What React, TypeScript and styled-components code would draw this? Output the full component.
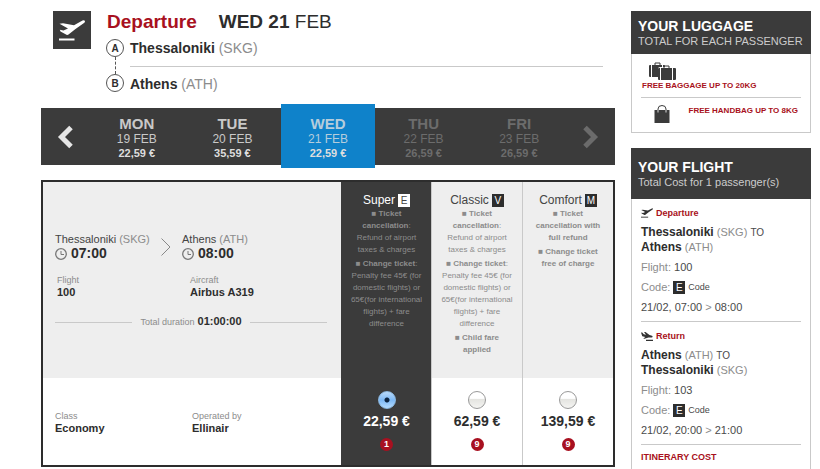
import React, { useState } from 'react';
import styled, { createGlobalStyle, css } from 'styled-components';

const ink = '#2d2d2d';
const dark = '#3b3b3b';
const red = '#a81020';
const muted = '#8c8c8c';
const rule = '#c9c9c9';

const Global = createGlobalStyle`
  * { box-sizing: border-box; }
  body {
    margin: 0;
    background: #fff;
    color: ${ink};
    font-family: "Liberation Sans", Arial, sans-serif;
  }
  h1, h2, h3, p, ul, dl, dd { margin: 0; padding: 0; }
  button { font: inherit; border: 0; padding: 0; background: none; cursor: pointer; }
`;

const Page = styled.div`
  display: grid;
  grid-template-columns: minmax(0, 1fr) 180px;
  gap: 16px;
  min-height: 100vh;
  padding: 11px 9px 0 41px;
`;

const Header = styled.header`
  display: flex;
  gap: 15px;
  padding: 0 12px;
`;

const IconTile = styled.div`
  display: grid;
  place-items: center;
  flex: none;
  width: 38px;
  height: 38px;
  background: ${dark};
  color: #fff;
`;

const Trip = styled.div`
  flex: 1;
`;

const Heading = styled.div`
  display: flex;
  gap: 22px;
  padding-left: 1px;
  font-size: 19px;
  line-height: 22px;
  margin-bottom: 6px;
`;

const Direction = styled.h1`
  font-size: inherit;
  color: ${red};
`;

const Route = styled.div`
  display: grid;
  grid-template-columns: 18px 1fr;
  column-gap: 6px;
`;

const Markers = styled.div`
  display: flex;
  flex-direction: column;
  align-items: center;
`;

const Marker = styled.span`
  display: grid;
  place-items: center;
  width: 18px;
  height: 18px;
  border: 1px solid #555;
  border-radius: 50%;
  font-size: 10px;
  font-weight: bold;
`;

const Dashes = styled.span`
  height: 17px;
  border-left: 1px dashed #555;
`;

const Stop = styled.div<{ $last?: boolean }>`
  font-size: 14px;
  line-height: 18px;
  padding-bottom: ${p => (p.$last ? 0 : 9)}px;
  border-bottom: ${p => (p.$last ? 'none' : `1px solid ${rule}`)};
  margin-bottom: ${p => (p.$last ? 0 : 8)}px;
`;

const Muted = styled.span<{ $size?: number }>`
  color: ${muted};
  font-weight: normal;
  ${p => p.$size && css`font-size: ${p.$size}px;`}
`;

const DayBar = styled.nav`
  display: grid;
  grid-template-columns: 48px repeat(5, 1fr) 48px;
  margin: 15px 0;
  background: ${dark};
  height: 57px;
`;

const Arrow = styled.button<{ $dim?: boolean }>`
  display: grid;
  place-items: center;
  color: ${p => (p.$dim ? '#6b6b6b' : '#e6e6e6')};
`;

const Day = styled.button<{ $state: 'open' | 'active' | 'dim' }>`
  display: flex;
  flex-direction: column;
  align-items: center;
  padding-top: 7px;
  font-size: 12px;
  line-height: 15px;
  color: ${p => (p.$state === 'dim' ? '#6c6c6c' : '#c9c9c9')};
  ${p => p.$state === 'active' && css`
    background: #0f82ca;
    color: #b5cddc;
    margin: -4px 1px -3px;
    padding-top: 11px;
  `}
`;

const DayName = styled.strong`
  font-size: 15px;
  line-height: 17px;
`;

const DayPrice = styled.strong<{ $bright?: boolean }>`
  font-size: 11px;
  line-height: 13px;
  ${p => p.$bright && css`color: #dedede;`}
`;

const Fares = styled.section`
  display: grid;
  grid-template-columns: minmax(0, 1fr) 90px 91px 91px;
  border: 2px solid ${ink};
`;

const Details = styled.div`
  background: #eee;
  padding: 50px 14px 0 12px;
`;

const Legs = styled.div`
  display: grid;
  grid-template-columns: 106px 21px 1fr;
  align-items: center;
`;

const Place = styled.div`
  font-size: 11px;
  line-height: 14px;
  color: #444;
  white-space: nowrap;
`;

const Time = styled.div`
  display: flex;
  align-items: center;
  gap: 4px;
  font-size: 14px;
  line-height: 15px;
  font-weight: bold;
  color: ${ink};
`;

const Facts = styled.dl<{ $inset?: number; $split?: number }>`
  display: grid;
  grid-template-columns: ${p => p.$split}px 1fr;
  padding-left: ${p => p.$inset || 0}px;
  line-height: 12px;
`;

const FactsBlock = styled.div`
  margin-top: 13px;
`;

const FactName = styled.dt`
  font-size: 9px;
  color: ${muted};
`;

const FactValue = styled.dd`
  font-size: 11px;
  font-weight: bold;
`;

const Duration = styled.div`
  display: flex;
  align-items: center;
  gap: 8px;
  margin-top: 17px;
  font-size: 11px;
  line-height: 13px;
  font-weight: bold;
  &::before, &::after {
    content: '';
    flex: 1;
    border-top: 1px solid ${rule};
  }
`;

const Operation = styled.div`
  padding: 32px 12px 0;
`;

const FareInfo = styled.div<{ $active: boolean }>`
  padding: 11px 6px 22px;
  border-left: 1px solid ${p => (p.$active ? dark : rule)};
  background: ${p => (p.$active ? dark : '#eee')};
  color: ${p => (p.$active ? '#fff' : '#444')};
  text-align: center;
`;

const FareTitle = styled.h3`
  display: flex;
  justify-content: center;
  align-items: center;
  gap: 3px;
  font-size: 12px;
  line-height: 15px;
  font-weight: normal;
`;

const CodeBadge = styled.span<{ $light?: boolean }>`
  display: inline-grid;
  place-items: center;
  width: 12px;
  height: 13px;
  font-size: 10px;
  line-height: 13px;
  background: ${p => (p.$light ? '#fff' : ink)};
  color: ${p => (p.$light ? '#444' : '#fff')};
`;

const Terms = styled.ul`
  display: grid;
  gap: 2px;
  list-style: none;
  font-size: 8px;
  line-height: 12px;
  color: ${muted};
`;

const Line = styled.span`
  display: block;
  white-space: nowrap;
`;

const FarePick = styled.label<{ $active: boolean }>`
  display: flex;
  flex-direction: column;
  align-items: center;
  padding: 13px 0 14px;
  border-left: 1px solid ${p => (p.$active ? dark : rule)};
  background: ${p => (p.$active ? dark : '#fff')};
  color: ${p => (p.$active ? '#fff' : ink)};
  font-size: 14px;
  line-height: 16px;
  font-weight: bold;
  cursor: pointer;
`;

const Radio = styled.input`
  appearance: none;
  width: 18px;
  height: 18px;
  margin: 0 0 4px;
  border: 1px solid #999;
  border-radius: 50%;
  background: linear-gradient(#fff 40%, #e4e4e0 45%, #f4f4f2);
  &:checked {
    border-color: #8cb8e0;
    background:
      radial-gradient(circle, #0b2340 2px, transparent 3px),
      linear-gradient(#b9dafa, #7db8f4 50%, #b5dcff);
  }
`;

const Seats = styled.span`
  display: grid;
  place-items: center;
  width: 13px;
  height: 13px;
  margin-top: 9px;
  border-radius: 50%;
  background: ${red};
  color: #fff;
  font-size: 9px;
  line-height: 13px;
`;

const Side = styled.aside`
  display: flex;
  flex-direction: column;
  gap: 15px;
`;

const Panel = styled.section<{ $grow?: boolean }>`
  border: 1px solid ${rule};
  border-top: 0;
  ${p => p.$grow && css`flex: 1; border-bottom: 0;`}
`;

const PanelHead = styled.header<{ $tall?: boolean }>`
  margin: 0 -1px;
  padding: ${p => (p.$tall ? '11px 7px 9px' : '7px 7px 5px')};
  background: ${dark};
  color: #ccc;
  font-size: 11px;
  line-height: 15px;
  white-space: nowrap;
`;

const PanelTitle = styled.h2`
  font-size: 14px;
  line-height: 16px;
  color: #fff;
`;

const PanelBody = styled.div`
  padding: 0 9px;
`;

const Allowance = styled.p<{ $row?: boolean }>`
  display: flex;
  flex-direction: ${p => (p.$row ? 'row' : 'column')};
  justify-content: ${p => (p.$row ? 'space-between' : 'flex-start')};
  padding: ${p => (p.$row ? '7px 3px 8px 13px' : '8px 1px 5px')};
  font-size: 8px;
  line-height: 12px;
  font-weight: bold;
  color: ${red};
  white-space: nowrap;
`;

const Divider = styled.hr`
  margin: 0;
  border: 0;
  border-top: 1px solid ${rule};
`;

const BagIcon = styled.svg`
  display: block;
  margin-left: 7px;
`;

const Leg = styled.div`
  padding: 8px 0 4px;
  font-size: 11px;
  line-height: 20px;
  color: #4a4a4a;
`;

const LegKind = styled.h3`
  display: flex;
  align-items: center;
  gap: 3px;
  font-size: 9px;
  line-height: 12px;
  color: ${red};
`;

const LegRoute = styled.p`
  margin: 6px 0 2px;
  line-height: 15px;
  strong, span { line-height: 1; }
  strong { font-size: 12px; color: ${ink}; }
`;

const ToWord = styled.span`
  font-size: 10px;
`;

const CodeRow = styled.p`
  display: flex;
  align-items: center;
  gap: 3px;
`;

const Small = styled.span`
  font-size: 9px;
`;

const CostTitle = styled.h3`
  padding: 6px 0 5px;
  font-size: 9px;
  line-height: 13px;
  color: ${red};
`;

const Takeoff = ({ width, height, color = 'currentColor' }: { width: number; height: number; color?: string }) => (
  <svg width={width} height={height} viewBox="0 0 26 21" fill={color} aria-hidden="true">
    <path d="M.5 3.800L4 3.200 15 5.300 23.500.5q2-.8 2.500.8 0 1-1 1.700L16.500 9 9.500 14.500q-1 .7-2 .2L1.500 11.500.8 9.800 4.500 10.500 9 8.600z" />
    <path d="M0 18.500h15.500V20.500H0z" />
  </svg>
);

const Landing = () => (
  <svg width="12" height="10" viewBox="0 0 24 20" fill="#333" aria-hidden="true">
    <path d="M0 3h2.500l3 3.500 4.500.8L6 2h3l8 6 5 1.500c2 .8 1.500 3.500-.5 3.500H15l-8 2.500H4.500l4-3.500-6-1.500z" />
    <path d="M10 17.500h14V20H10z" />
  </svg>
);

const Clock = () => (
  <svg width="12" height="12" viewBox="0 0 12 12" fill="none" stroke="#777" aria-hidden="true">
    <circle cx="6" cy="6" r="5.300" strokeWidth="1.300" />
    <path d="M6 3V6.500H9" />
  </svg>
);

const Caret = ({ flip }: { flip?: boolean }) => (
  <svg width="16" height="24" viewBox="0 0 16 24" fill="none" stroke="currentColor" strokeWidth="5" aria-hidden="true">
    <path d={flip ? 'M2 2.500L11.500 12 2 21.500' : 'M14 2.500L4.500 12 14 21.500'} />
  </svg>
);

const days = [
  { name: 'MON', date: '19 FEB', price: '22,59 €', state: 'open' },
  { name: 'TUE', date: '20 FEB', price: '35,59 €', state: 'open' },
  { name: 'WED', date: '21 FEB', price: '22,59 €', state: 'active' },
  { name: 'THU', date: '22 FEB', price: '26,59 €', state: 'dim' },
  { name: 'FRI', date: '23 FEB', price: '26,59 €', state: 'dim' },
] as const;

type Term = { bold: string[]; colon?: boolean; text?: string[] };

const paid: Term[] = [
  { bold: ['■ Ticket', 'cancellation'], colon: true, text: ['Refund of airport', 'taxes & charges'] },
  {
    bold: ['■ Change ticket'],
    colon: true,
    text: ['Penalty fee 45€ (for', 'domestic flights) or', '65€(for international', 'flights) + fare', 'difference'],
  },
];

const fares: { name: string; code: string; price: string; seats: number; terms: Term[] }[] = [
  { name: 'Super', code: 'E', price: '22,59 €', seats: 1, terms: paid },
  { name: 'Classic', code: 'V', price: '62,59 €', seats: 9, terms: [...paid, { bold: ['■ Child fare', 'applied'] }] },
  {
    name: 'Comfort',
    code: 'M',
    price: '139,59 €',
    seats: 9,
    terms: [{ bold: ['■ Ticket', 'cancellation with', 'full refund'] }, { bold: ['■ Change ticket', 'free of charge'] }],
  },
];

const legs = [
  { kind: 'Departure', from: 'Thessaloniki', fromCode: 'SKG', to: 'Athens', toCode: 'ATH', flight: '100', start: '21/02, 07:00', end: '08:00' },
  { kind: 'Return', from: 'Athens', fromCode: 'ATH', to: 'Thessaloniki', toCode: 'SKG', flight: '103', start: '21/02, 20:00', end: '21:00' },
];

export default function App() {
  const [picked, setPicked] = useState('Super');
  return (
    <>
      <Global />
      <Page>
        <main>
          <Header>
            <IconTile><Takeoff width={26} height={21} /></IconTile>
            <Trip>
              <Heading>
                <Direction>Departure</Direction>
                <span><strong>WED 21</strong> FEB</span>
              </Heading>
              <Route>
                <Markers>
                  <Marker>A</Marker>
                  <Dashes />
                  <Marker>B</Marker>
                </Markers>
                <div>
                  <Stop><strong>Thessaloniki</strong> <Muted>(SKG)</Muted></Stop>
                  <Stop $last><strong>Athens</strong> <Muted>(ATH)</Muted></Stop>
                </div>
              </Route>
            </Trip>
          </Header>

          <DayBar aria-label="Travel day">
            <Arrow aria-label="Previous days"><Caret /></Arrow>
            {days.map(d => (
              <Day key={d.name} $state={d.state}>
                <DayName>{d.name}</DayName>
                <span>{d.date}</span>
                <DayPrice $bright={d.state !== 'dim'}>{d.price}</DayPrice>
              </Day>
            ))}
            <Arrow $dim aria-label="Next days"><Caret flip /></Arrow>
          </DayBar>

          <Fares>
            <Details>
              <Legs>
                <div>
                  <Place>Thessaloniki <Muted>(SKG)</Muted></Place>
                  <Time><Clock />07:00</Time>
                </div>
                <svg width="10" height="18" viewBox="0 0 10 18" fill="none" stroke="#888" aria-hidden="true">
                  <path d="M.5 .5L9 9 .5 17.500" />
                </svg>
                <div>
                  <Place>Athens <Muted>(ATH)</Muted></Place>
                  <Time><Clock />08:00</Time>
                </div>
              </Legs>
              <FactsBlock>
                <Facts $inset={2} $split={133}>
                  <div><FactName>Flight</FactName><FactValue>100</FactValue></div>
                  <div><FactName>Aircraft</FactName><FactValue>Airbus A319</FactValue></div>
                </Facts>
              </FactsBlock>
              <Duration><span><Muted $size={9}>Total duration</Muted> 01:00:00</span></Duration>
            </Details>
            {fares.map(f => (
              <FareInfo key={f.name} $active={picked === f.name}>
                <FareTitle>{f.name} <CodeBadge $light={picked === f.name}>{f.code}</CodeBadge></FareTitle>
                <Terms>
                  {f.terms.map(t => (
                    <li key={t.bold[0]}>
                      {t.bold.map((b, i) => (
                        <Line key={b}><strong>{b}</strong>{t.colon && i === t.bold.length - 1 ? ':' : ''}</Line>
                      ))}
                      {t.text?.map(x => <Line key={x}>{x}</Line>)}
                    </li>
                  ))}
                </Terms>
              </FareInfo>
            ))}
            <Operation>
              <Facts $split={137}>
                <div><FactName>Class</FactName><FactValue>Economy</FactValue></div>
                <div><FactName>Operated by</FactName><FactValue>Ellinair</FactValue></div>
              </Facts>
            </Operation>
            {fares.map(f => (
              <FarePick key={f.name} $active={picked === f.name}>
                <Radio
                  type="radio"
                  name="fare"
                  aria-label={f.name}
                  checked={picked === f.name}
                  onChange={() => setPicked(f.name)}
                />
                <span>{f.price}</span>
                <Seats>{f.seats}</Seats>
              </FarePick>
            ))}
          </Fares>
        </main>

        <Side>
          <Panel>
            <PanelHead>
              <PanelTitle>YOUR LUGGAGE</PanelTitle>
              TOTAL FOR EACH PASSENGER
            </PanelHead>
            <PanelBody>
              <Allowance>
                <BagIcon width="28" height="18" viewBox="0 0 28 18" fill={dark} aria-hidden="true">
                  <path d="M0 4q0-1 1-1h1v12H1q-1 0-1-1zM3 3h10v2h-2q-2 0-2 2v8H3zM14 3h1q1 0 1 1v1h-2z" />
                  <path d="M6 3V1h5v2" fill="none" stroke={dark} />
                  <path d="M9 7q0-1 1-1h1v12h-1q-1 0-1-1zM12 6h11v12H12zM24 6h2q1 0 1 1v10q0 1-1 1h-2z" />
                  <path d="M15 6V4h5v2" fill="none" stroke={dark} />
                </BagIcon>
                FREE BAGGAGE UP TO 20KG
              </Allowance>
              <Divider />
              <Allowance $row>
                <svg width="16" height="19" viewBox="0 0 16 19" fill={dark} aria-hidden="true">
                  <path d="M.5 5h15v13H.5z" />
                  <path d="M4 5V4a4 3.500 0 0 1 8 0v1" fill="none" stroke={dark} />
                  <path d="M4 5v2.500M12 5v2.500" stroke="#ddd" />
                </svg>
                FREE HANDBAG UP TO 8KG
              </Allowance>
            </PanelBody>
          </Panel>

          <Panel $grow>
            <PanelHead $tall>
              <PanelTitle>YOUR FLIGHT</PanelTitle>
              Total Cost for 1 passenger(s)
            </PanelHead>
            <PanelBody>
              {legs.map(l => (
                <React.Fragment key={l.kind}>
                  <Leg>
                    <LegKind>
                      {l.kind === 'Departure' ? <Takeoff width={12} height={10} color="#333" /> : <Landing />}
                      {l.kind}
                    </LegKind>
                    <LegRoute>
                      <strong>{l.from}</strong> <Muted>({l.fromCode})</Muted> <ToWord>TO</ToWord><br />
                      <strong>{l.to}</strong> <Muted>({l.toCode})</Muted>
                    </LegRoute>
                    <p><Muted>Flight:</Muted> {l.flight}</p>
                    <CodeRow><Muted>Code:</Muted><CodeBadge>E</CodeBadge><Small>Code</Small></CodeRow>
                    <p>{l.start} <Muted>&gt;</Muted> {l.end}</p>
                  </Leg>
                  <Divider />
                </React.Fragment>
              ))}
              <CostTitle>ITINERARY COST</CostTitle>
            </PanelBody>
          </Panel>
        </Side>
      </Page>
    </>
  );
}
